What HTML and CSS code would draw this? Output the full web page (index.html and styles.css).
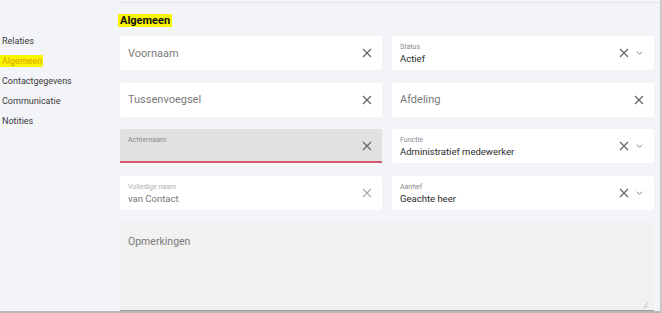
FILE: index.html
```html
<!DOCTYPE html>
<html lang="nl">
<head>
  <meta charset="UTF-8">
  <meta name="viewport" content="width=device-width, initial-scale=1.0">
  <title>Relatie | Algemeen</title>
  <link rel="stylesheet" href="styles.css">
</head>
<body>
  <div class="window">
    <nav class="sidebar">
      <a class="nav__item" href="#">Relaties</a>
      <a class="nav__item nav__item--active" href="#">Algemeen</a>
      <a class="nav__item" href="#">Contactgegevens</a>
      <a class="nav__item" href="#">Communicatie</a>
      <a class="nav__item" href="#">Notities</a>
    </nav>
    <main class="content">
      <h1 class="section__title"><span>Algemeen</span></h1>
      <div class="form">
        <div class="field">
          <span class="field__placeholder">Voornaam</span>
          <span class="field__icons">
            <svg class="icon icon--clear" viewBox="0 0 10 10"><path d="M1 1L9 9M9 1L1 9"/></svg>
          </span>
        </div>
        <div class="field">
          <div class="field__body">
            <span class="field__label">Status</span>
            <span class="field__value">Actief</span>
          </div>
          <span class="field__icons">
            <svg class="icon icon--clear" viewBox="0 0 10 10"><path d="M1 1L9 9M9 1L1 9"/></svg>
            <svg class="icon icon--chevron" viewBox="0 0 10 6"><path d="M1 1L5 5L9 1"/></svg>
          </span>
        </div>
        <div class="field">
          <span class="field__placeholder">Tussenvoegsel</span>
          <span class="field__icons">
            <svg class="icon icon--clear" viewBox="0 0 10 10"><path d="M1 1L9 9M9 1L1 9"/></svg>
          </span>
        </div>
        <div class="field">
          <span class="field__placeholder">Afdeling</span>
          <span class="field__icons">
            <svg class="icon icon--clear" viewBox="0 0 10 10"><path d="M1 1L9 9M9 1L1 9"/></svg>
          </span>
        </div>
        <div class="field field--focused field--error">
          <div class="field__body field__body--top">
            <span class="field__label">Achternaam</span>
          </div>
          <span class="field__icons">
            <svg class="icon icon--clear" viewBox="0 0 10 10"><path d="M1 1L9 9M9 1L1 9"/></svg>
          </span>
        </div>
        <div class="field">
          <div class="field__body">
            <span class="field__label">Functie</span>
            <span class="field__value">Administratief medewerker</span>
          </div>
          <span class="field__icons">
            <svg class="icon icon--clear" viewBox="0 0 10 10"><path d="M1 1L9 9M9 1L1 9"/></svg>
            <svg class="icon icon--chevron" viewBox="0 0 10 6"><path d="M1 1L5 5L9 1"/></svg>
          </span>
        </div>
        <div class="field field--disabled">
          <div class="field__body">
            <span class="field__label">Volledige naam</span>
            <span class="field__value">van Contact</span>
          </div>
          <span class="field__icons">
            <svg class="icon icon--clear" viewBox="0 0 10 10"><path d="M1 1L9 9M9 1L1 9"/></svg>
          </span>
        </div>
        <div class="field">
          <div class="field__body">
            <span class="field__label">Aanhef</span>
            <span class="field__value">Geachte heer</span>
          </div>
          <span class="field__icons">
            <svg class="icon icon--clear" viewBox="0 0 10 10"><path d="M1 1L9 9M9 1L1 9"/></svg>
            <svg class="icon icon--chevron" viewBox="0 0 10 6"><path d="M1 1L5 5L9 1"/></svg>
          </span>
        </div>
        <div class="textarea">
          <span class="field__placeholder">Opmerkingen</span>
          <svg class="grip" viewBox="0 0 6 6"><path d="M0 6L6 0M3 6L6 3"/></svg>
        </div>
      </div>
    </main>
  </div>
</body>
</html>
```

FILE: styles.css
```css
:root {
  --bg: #f3f4f8;
  --line: #e2e3e7;
  --text: #2b2b2b;
  --muted: #7a7a7a;
  --icon: #666;
  --highlight: #f7f500;
  --error: #d2596a;
}
html, body {
  margin: 0;
  padding: 0;
}
body {
  font-family: Roboto, "Noto Sans", sans-serif;
  background: #fff;
  width: 662px;
  height: 313px;
  overflow: hidden;
}
.window {
  display: flex;
  box-sizing: border-box;
  width: 662px;
  height: 313px;
  background: var(--bg);
  border-right: 2px solid #c9c9cb;
  border-bottom: 2px solid #b9b9bb;
}
.sidebar {
  display: flex;
  flex-direction: column;
  align-items: flex-start;
  width: 119px;
  padding-top: 35px;
}
.nav__item {
  font-size: 9px;
  line-height: 12px;
  height: 12px;
  margin-bottom: 8px;
  padding: 0 1px 0 2px;
  color: #3a3a3a;
  text-decoration: none;
}
.nav__item--active {
  background: var(--highlight);
  color: #e0a100;
}
.content {
  flex: 1;
  display: flex;
  flex-direction: column;
  margin-top: 2px;
  padding: 0 4px 0 1px;
  border-top: 1px solid var(--line);
}
.section__title {
  margin: 11px 0 8px -2px;
  font-size: 11px;
  line-height: 14px;
}
.section__title span {
  background: var(--highlight);
  padding: 0 2px;
  color: #111;
}
.form {
  display: grid;
  grid-template-columns: 262px 262px;
  column-gap: 10px;
  row-gap: 12.5px;
}
.field {
  display: flex;
  align-items: center;
  box-sizing: border-box;
  height: 34px;
  padding: 0 10px 0 8px;
  background: #fff;
  border-radius: 2px;
}
.field__placeholder {
  flex: 1;
  font-size: 11px;
  color: var(--muted);
}
.field__body {
  flex: 1;
  display: flex;
  flex-direction: column;
  padding-top: 2px;
}
.field__body--top {
  align-self: flex-start;
  padding-top: 7px;
}
.field__label {
  font-size: 7px;
  line-height: 9px;
  color: #8a8a8a;
}
.field__value {
  font-size: 9.5px;
  line-height: 13px;
  color: var(--text);
}
.field__icons {
  display: flex;
  align-items: center;
  gap: 7px;
}
.icon {
  fill: none;
  stroke: var(--icon);
  stroke-width: 1.2;
}
.icon--clear {
  width: 10px;
  height: 10px;
}
.icon--chevron {
  width: 7px;
  height: 4px;
  stroke-width: 1.2;
  margin-right: 1px;
}
.field--focused {
  background: #e1e1e1;
  border-radius: 2px 2px 0 0;
}
.field--focused .field__icons {
  padding-top: 2px;
}
.field--error {
  border-bottom: 2px solid var(--error);
}
.field--disabled .field__label {
  color: #b0b0b0;
}
.field--disabled .field__value {
  color: #777;
}
.field--disabled .icon {
  stroke: #aaa;
}
.textarea {
  grid-column: 1 / 3;
  position: relative;
  box-sizing: border-box;
  height: 89px;
  padding: 8px 8px;
  background: #f1f1f1;
  border-bottom: 1px solid #9c9c9c;
}
.textarea .field__placeholder {
  font-size: 10.5px;
}
.grip {
  position: absolute;
  right: 6px;
  bottom: 2px;
  width: 5px;
  height: 5px;
  fill: none;
  stroke: #aaa;
  stroke-width: 0.8;
}
```
